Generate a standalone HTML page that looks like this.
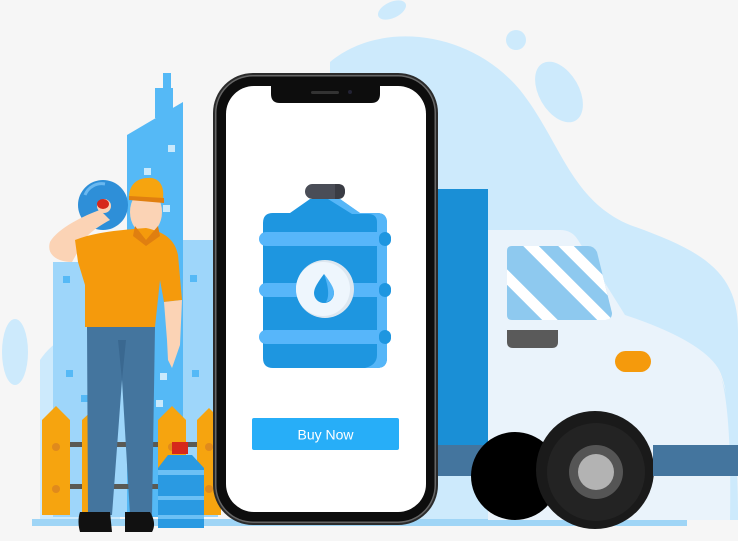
<!DOCTYPE html>
<html><head><meta charset="utf-8"><style>
html,body{margin:0;padding:0;background:#f6f6f6;width:738px;height:541px;overflow:hidden}
svg{display:block}
</style></head><body>
<svg width="738" height="541" viewBox="0 0 738 541" xmlns="http://www.w3.org/2000/svg">
<rect width="738" height="541" fill="#f6f6f6"/>
<path d="M330 62 C380 20 470 30 520 90 C560 140 570 200 630 225 C700 250 738 270 738 330 L738 470 C728 400 725 380 718 368 C738 420 738 480 738 520 L330 520 Z" fill="#cdeafc"/>
<path d="M40 360 C60 330 100 320 120 340 L120 520 L40 520 Z" fill="#cdeafc"/>
<ellipse cx="392" cy="10" rx="15" ry="8" transform="rotate(-25 392 10)" fill="#cdeafc"/>
<circle cx="516" cy="40" r="10" fill="#cdeafc"/>
<ellipse cx="559" cy="92" rx="20" ry="33" transform="rotate(-30 559 92)" fill="#cdeafc"/>
<ellipse cx="15" cy="352" rx="13" ry="33" fill="#cdeafc"/>
<rect x="53" y="262" width="75" height="255" fill="#9ed6fa"/>
<rect x="183" y="240" width="35" height="277" fill="#9ed6fa"/>
<path d="M127 135 L183 102 L183 517 L127 517 Z" fill="#55b9f6"/>
<rect x="155" y="88" width="18" height="30" fill="#55b9f6"/>
<rect x="163" y="73" width="8" height="20" fill="#55b9f6"/>
<g fill="#c9e9fc"><rect x="168" y="145" width="7" height="7"/><rect x="144" y="168" width="7" height="7"/><rect x="163" y="205" width="7" height="7"/><rect x="160" y="373" width="7" height="7"/><rect x="156" y="400" width="7" height="7"/></g>
<g fill="#55b9f6"><rect x="63" y="276" width="7" height="7"/><rect x="88" y="274" width="7" height="7"/><rect x="66" y="370" width="7" height="7"/><rect x="81" y="395" width="7" height="7"/><rect x="190" y="275" width="7" height="7"/><rect x="192" y="370" width="7" height="7"/></g>
<rect x="55" y="442" width="160" height="5" fill="#5a5a55"/>
<rect x="55" y="484" width="160" height="5" fill="#5a5a55"/>
<g fill="#f6a40f">
<path d="M42 420 L56 406 L70 420 L70 515 L42 515 Z"/>
<path d="M82 420 L95 408 L108 420 L108 515 L82 515 Z"/>
<path d="M158 420 L172 406 L186 420 L186 515 L158 515 Z"/>
<path d="M197 420 L209 408 L221 420 L221 515 L197 515 Z"/>
</g>
<g fill="#e08a1c"><circle cx="56" cy="447" r="4"/><circle cx="56" cy="489" r="4"/><circle cx="172" cy="447" r="4"/><circle cx="209" cy="447" r="4"/><circle cx="209" cy="489" r="4"/></g>
<rect x="32" y="519" width="655" height="7" fill="#9fd5f6"/>
<circle cx="103" cy="205" r="25" fill="#2e8fd8"/>
<path d="M85 195 A18 18 0 0 1 105 184" stroke="#6ab8f0" stroke-width="3" fill="none"/>
<path d="M72 262 C58 262 46 255 50 242 C58 228 85 215 100 210 L110 220 C95 228 82 238 80 248 Z" fill="#fbd3b5"/>
<circle cx="104" cy="206" r="7" fill="#fbd3b5"/>
<ellipse cx="103" cy="204" rx="6" ry="5" fill="#d6281b"/>
<ellipse cx="146" cy="212" rx="16" ry="22" fill="#fbd3b5"/>
<path d="M129 200 C128 182 140 177 152 178 C162 180 164 190 163 198 Z" fill="#f6a40f"/>
<path d="M129 196 L164 198 L164 203 L129 200 Z" fill="#e07f10"/>
<path d="M75 240 C95 232 120 230 146 228 C165 232 175 240 178 255 L182 300 L164 302 L160 280 L155 327 L85 327 L85 285 L78 262 Z" fill="#f59a0c"/>
<path d="M135 226 L146 240 L158 226 L160 236 L146 246 L133 236 Z" fill="#e07f10"/>
<path d="M164 302 L182 300 L180 345 L172 368 L168 360 L167 340 Z" fill="#fbd3b5"/>
<path d="M87 327 L155 327 L152 515 L130 515 L122 380 L112 515 L88 515 Z" fill="#44759e"/>
<path d="M118 340 L122 380 L126 340 Z" fill="#3a6890"/>
<path d="M80 512 L110 512 L112 532 L80 532 C78 525 78 518 80 512 Z" fill="#111"/>
<path d="M125 512 L150 512 C155 520 155 527 152 532 L125 532 Z" fill="#111"/>
<rect x="172" y="442" width="16" height="12" fill="#d6281b"/>
<path d="M168 455 L192 455 L204 468 L204 528 L158 528 L158 468 Z" fill="#2a9ae2"/>
<g fill="#6cc0f5"><rect x="158" y="470" width="46" height="5"/><rect x="158" y="496" width="46" height="4"/><rect x="158" y="515" width="46" height="4"/></g>
<rect x="437" y="189" width="51" height="256" fill="#1a8fd6"/>
<path d="M488 230 L560 230 Q572 230 578 240 L625 315 Q700 340 718 368 Q732 400 730 520 L488 520 Z" fill="#eaf3fb"/>
<defs><clipPath id="w"><path d="M512 246 L588 246 Q594 246 597 252 L612 313 Q612 320 605 320 L512 320 Q507 320 507 315 L507 251 Q507 246 512 246 Z"/></clipPath></defs>
<g clip-path="url(#w)">
<rect x="500" y="240" width="120" height="85" fill="#8ec9ef"/>
<g stroke="#fff" stroke-width="11"><line x1="490" y1="260" x2="560" y2="330"/><line x1="520" y1="235" x2="610" y2="325"/><line x1="555" y1="235" x2="640" y2="320"/></g>
</g>
<path d="M507 330 L558 330 L558 342 Q558 348 552 348 L513 348 Q507 348 507 342 Z" fill="#5a5a5a"/>
<rect x="615" y="351" width="36" height="21" rx="10.5" fill="#f59a0c"/>
<rect x="437" y="445" width="100" height="31" fill="#44759e"/>
<circle cx="515" cy="476" r="44" fill="#000"/>
<circle cx="595" cy="470" r="59" fill="#1a1a1a"/>
<circle cx="596" cy="472" r="49" fill="#232323"/>
<circle cx="596" cy="472" r="27" fill="#555"/>
<circle cx="596" cy="472" r="18" fill="#b3b3b3"/>
<rect x="653" y="445" width="85" height="31" fill="#44759e"/>
<rect x="213" y="73" width="225" height="452" rx="40" fill="#2b2b2b"/>
<rect x="215" y="75" width="221" height="448" rx="38" fill="#666"/>
<rect x="216.5" y="76.5" width="218" height="445" rx="36.5" fill="#0d0d0d"/>
<rect x="226" y="86" width="200" height="426" rx="28" fill="#fff"/>
<path d="M271 86 L380 86 L380 94 Q380 103 371 103 L280 103 Q271 103 271 94 Z" fill="#0d0d0d"/>
<rect x="311" y="91" width="28" height="3" rx="1.5" fill="#333"/>
<circle cx="350" cy="92" r="2" fill="#223"/>
<rect x="305" y="184" width="40" height="15" rx="7.5" fill="#4a4d57"/>
<path d="M335 184 L338 184 Q345 184 345 191 Q345 199 338 199 L335 199 Z" fill="#3a3c44"/>
<path d="M310 199 L340 199 L360 213 L377 213 Q387 213 387 223 L387 358 Q387 368 377 368 L273 368 Q263 368 263 358 L263 223 Q263 213 273 213 L290 213 Z" fill="#1e96e0"/>
<path d="M328 199 L340 199 L360 213 L377 213 Q387 213 387 223 L387 358 Q387 368 377 368 L365 368 Q377 365 377 355 L377 222 Q377 214 368 214 L352 214 Z" fill="#55b6f8"/>
<g fill="#57b6fa"><rect x="259" y="232" width="132" height="14" rx="7"/><rect x="259" y="283" width="132" height="14" rx="7"/><rect x="259" y="330" width="132" height="14" rx="7"/></g>
<g fill="#1e96e0"><rect x="379" y="232" width="12" height="14" rx="6"/><rect x="379" y="283" width="12" height="14" rx="6"/><rect x="379" y="330" width="12" height="14" rx="6"/></g>
<circle cx="325" cy="289" r="29" fill="#dde7f0"/>
<circle cx="323" cy="289" r="27" fill="#eef6fd"/>
<path d="M324 274 C330 282 334 288 334 293 A10 10 0 0 1 314 293 C314 288 318 282 324 274 Z" fill="#1e96e0"/>
<path d="M324 274 C330 282 334 288 334 293 A10 10 0 0 1 326 302 C330 296 328 285 324 274 Z" fill="#55b6f8"/>
<rect x="252" y="418" width="147" height="32" rx="2" fill="#27aef8"/>
<text x="325.5" y="439.5" text-anchor="middle" font-family="Liberation Sans, sans-serif" font-size="14" fill="#fff">Buy Now</text>
</svg>
</body></html>
